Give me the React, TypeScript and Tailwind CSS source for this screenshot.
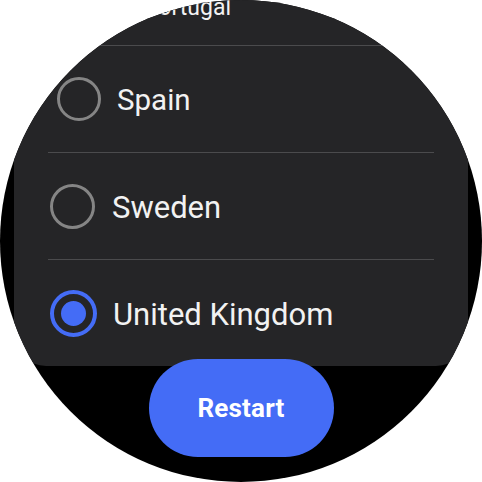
/**
 * Wear OS country picker — radio list with Restart chip
 */

type Country = {
  name: string;
  selected?: boolean;
  row: string;
  pad: string;
  gap: string;
  ring: string;
  dot: string;
  text: string;
};

const countries: Country[] = [
  {
    name: 'Portugal',
    row: 'h-[106px] pt-[30px]',
    pad: 'pl-[85px]',
    gap: 'gap-[12px]',
    ring: 'w-[33px] h-[33px] border-[2px]',
    dot: '',
    text: 'text-[23px]',
  },
  {
    name: 'Spain',
    row: 'h-[106px]',
    pad: 'pl-[43px]',
    gap: 'gap-[16px]',
    ring: 'w-[44px] h-[44px] border-[3px]',
    dot: '',
    text: 'text-[29.5px] pt-[4px]',
  },
  {
    name: 'Sweden',
    row: 'h-[106px]',
    pad: 'pl-[36px]',
    gap: 'gap-[17px]',
    ring: 'w-[45px] h-[45px] border-[3px]',
    dot: '',
    text: 'text-[31px] pt-[2px]',
  },
  {
    name: 'United Kingdom',
    selected: true,
    row: 'h-[106px]',
    pad: 'pl-[36px]',
    gap: 'gap-[16px]',
    ring: 'w-[47px] h-[47px] border-[4px]',
    dot: 'w-[25px] h-[25px]',
    text: 'text-[31px] pt-[3px]',
  },
];

export default function App() {
  return (
    <div className="w-[482px] h-[482px] bg-white" style={{ fontFamily: 'Roboto, "Noto Sans", sans-serif' }}>
      <div className="w-full h-full rounded-full bg-black overflow-hidden flex flex-col items-center">
        <div className="w-[454px] -mt-[61px] shrink-0 bg-[#252527] rounded-b-[32px]">
          {countries.map((c, i) => (
            <div key={c.name}>
              {i > 0 && <div className="h-px mx-[34px] bg-[#4b4b4d]" />}
              <Row country={c} />
            </div>
          ))}
        </div>
        <button className="relative z-10 -mt-[7px] w-[185px] h-[98px] shrink-0 rounded-full bg-[#446cf6] text-white text-[26px] font-bold tracking-[0.2px]">
          Restart
        </button>
      </div>
    </div>
  );
}

function Row({ country }: { country: Country }) {
  const c = country;
  return (
    <div className={`flex items-center ${c.row} ${c.pad} ${c.gap}`}>
      <span
        className={`${c.ring} shrink-0 rounded-full flex items-center justify-center ${
          c.selected ? 'border-[#446cf6]' : 'border-[#858585]'
        }`}
      >
        {c.selected && <span className={`${c.dot} rounded-full bg-[#446cf6]`} />}
      </span>
      <span className={`${c.text} text-[#f2f2f2] leading-none`}>{c.name}</span>
    </div>
  );
}
